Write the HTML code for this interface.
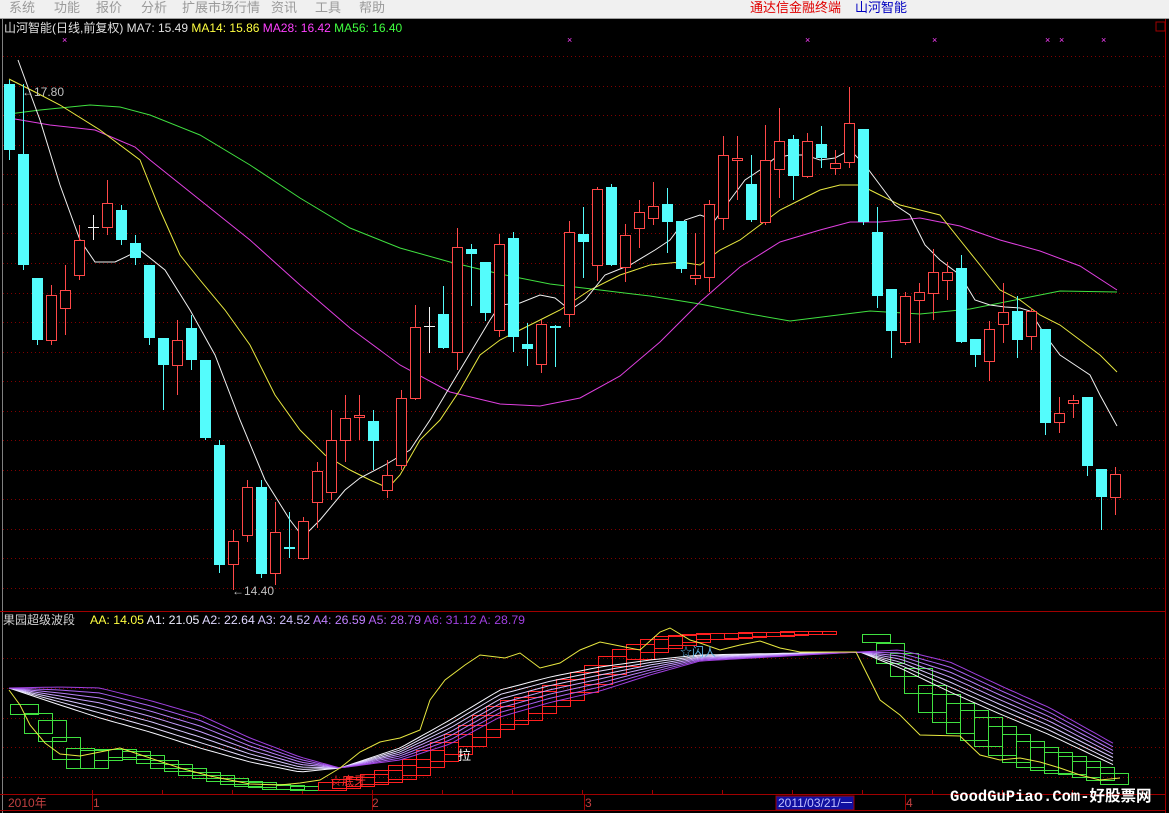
<!DOCTYPE html>
<html><head><meta charset="utf-8"><style>
body{margin:0;width:1169px;height:813px;overflow:hidden;background:#000;font-family:"Liberation Sans","Noto Sans CJK SC",sans-serif}
#menu{position:absolute;left:0;top:0;width:1169px;height:18px;background:#f0f0f0;border-bottom:1px solid #a0a0a0}
#menu span{position:absolute;top:0;font-size:13px;color:#9a9a9a;line-height:16px}
svg{position:absolute;left:0;top:0}
</style></head><body>
<div id="menu">
<span style="left:9px">系统</span><span style="left:54px">功能</span><span style="left:96px">报价</span><span style="left:141px">分析</span><span style="left:182px">扩展市场行情</span><span style="left:271px">资讯</span><span style="left:315px">工具</span><span style="left:359px">帮助</span>
<span style="left:750px;color:#e00000;font-size:13px">通达信金融终端</span><span style="left:855px;color:#0000c0;font-size:13px">山河智能</span>
</div>
<svg id="s" width="1169" height="813" xmlns="http://www.w3.org/2000/svg" font-family="Liberation Sans, Noto Sans CJK SC, sans-serif">
<rect x="0" y="19" width="1169" height="794" fill="#000"/>
<line x1="2.5" y1="19" x2="2.5" y2="813" stroke="#808080"/>
<line x1="1165.5" y1="19" x2="1165.5" y2="813" stroke="#a00000"/>
<rect x="1156" y="22" width="9" height="9" fill="none" stroke="#a00000"/>
<line x1="0" y1="611.5" x2="1166" y2="611.5" stroke="#a00000"/>
<line x1="0" y1="794.5" x2="1166" y2="794.5" stroke="#a00000"/>
<line x1="0" y1="810.5" x2="1166" y2="810.5" stroke="#a00000"/>
<g id="grid"></g>
<g id="ma" fill="none"></g>
<g id="cd"></g>
<g id="low" fill="none"></g>
<text x="4" y="32" font-size="12" fill="#e0e0e0">山河智能(日线,前复权) MA7: 15.49 <tspan fill="#ffff40">MA14: 15.86</tspan> <tspan fill="#ff40ff">MA28: 16.42</tspan> <tspan fill="#40ff40">MA56: 16.40</tspan></text>
<g fill="#ff40ff" font-size="9"><text x="62" y="43">×</text><text x="567" y="43">×</text><text x="805" y="43">×</text><text x="932" y="43">×</text><text x="1045" y="43">×</text><text x="1059" y="43">×</text><text x="1101" y="43">×</text></g>
<text x="22" y="96" font-size="12" fill="#c0c0c0">←17.80</text>
<text x="232" y="595" font-size="12" fill="#c0c0c0">←14.40</text>
<text x="3" y="624" font-size="12" fill="#d0d0d0">果园超级波段</text>
<text x="90" y="624" font-size="12.3" fill="#ffff40">AA: 14.05 <tspan fill="#f0f0ff">A1: 21.05</tspan> <tspan fill="#e0d8ff">A2: 22.64</tspan> <tspan fill="#d0c0ff">A3: 24.52</tspan> <tspan fill="#c080ff">A4: 26.59</tspan> <tspan fill="#b060f0">A5: 28.79</tspan> <tspan fill="#a040e0">A6: 31.12</tspan> <tspan fill="#a040e0">A: 28.79</tspan></text>
<text x="458" y="760" font-size="13" fill="#fff">拉</text>
<text x="330" y="785" font-size="12" fill="#ff3030">☆底牙</text>
<text x="680" y="656" font-size="12" fill="#60b0e0">☆闪人</text>
<g font-size="12" fill="#c04040"><text x="8" y="807">2010年</text><text x="93" y="807">1</text><text x="372" y="807">2</text><text x="585" y="807">3</text><text x="906" y="807">4</text></g>
<rect x="776" y="796" width="78" height="14" fill="#1010a0" stroke="#a00000"/>
<text x="778" y="807" font-size="12" fill="#c0c0ff">2011/03/21/一</text>
<text x="950" y="801" font-size="15.5" font-weight="bold" fill="#fff" font-family="Liberation Mono, Noto Sans CJK SC, monospace">GoodGuPiao.Com-好股票网</text>
</svg>
<script>
var NS="http://www.w3.org/2000/svg";
function el(p,t,a){var e=document.createElementNS(NS,t);for(var k in a)e.setAttribute(k,a[k]);document.getElementById(p).appendChild(e);return e;}
for(var y=588;y>50;y-=29.55){el("grid","line",{x1:3,x2:1165,y1:Math.round(y)+.5,y2:Math.round(y)+.5,stroke:"#800000","stroke-dasharray":"1 3"});}
[658,688,718,747,777].forEach(function(y){el("grid","line",{x1:3,x2:1165,y1:y+.5,y2:y+.5,stroke:"#800000","stroke-dasharray":"1 3"});});
for(var x=92;x<1160;x+=70){el("grid","line",{x1:x+.5,x2:x+.5,y1:790,y2:795,stroke:"#a00000"});}
[92,372,584,905].forEach(function(x){el("grid","line",{x1:x+.5,x2:x+.5,y1:795,y2:811,stroke:"#a00000"});});
function pl(g,pts,c,w){el(g,"polyline",{points:pts,stroke:c,"stroke-width":w||1});}
pl("ma","9,114 40,110 90,105 120,107 150,115 200,135 250,165 300,198 350,228 400,248 450,262 500,274 550,284 600,290 650,296 700,304 750,314 790,321 830,316 870,311 920,314 970,309 1020,299 1060,291 1117,292","#40e040");
pl("ma","9,118 50,125 95,130 135,147 150,160 200,200 250,240 300,285 350,328 400,365 450,392 500,404 540,406 580,398 620,376 660,342 700,302 740,267 780,242 820,230 850,222 880,222 920,218 960,226 1000,240 1040,251 1080,266 1117,290","#e040e0");
pl("ma","9,79 35,92 60,105 100,130 140,160 160,210 180,255 200,280 225,310 250,345 275,395 300,430 325,455 350,470 370,480 388,488 400,475 420,440 440,420 460,390 480,355 500,340 520,330 540,320 560,310 590,290 620,275 650,265 680,262 700,265 720,250 740,240 760,225 780,210 800,200 820,190 840,185 860,185 880,195 900,205 920,210 940,215 960,240 980,265 1000,290 1020,300 1040,315 1060,325 1080,340 1100,355 1117,372","#e8e840");
pl("ma","18,60 40,120 60,185 80,240 95,262 115,262 140,250 165,270 190,310 215,355 240,420 265,480 290,520 303,537 320,520 345,490 360,478 385,465 410,450 430,420 445,395 460,370 475,345 490,320 500,305 520,303 540,295 555,298 570,310 585,300 605,275 630,265 655,250 670,240 685,220 700,215 715,220 730,200 745,180 760,170 775,158 790,155 805,155 820,160 835,158 850,150 865,165 880,185 895,205 910,215 925,245 940,260 960,275 975,300 990,305 1005,307 1020,308 1030,311 1045,335 1060,355 1075,365 1090,375 1100,395 1117,426","#f0f0f0");
var C=[["C",84,150,80,160],["C",154,265,84,270],["C",278,340,278,345],["R",295,340,285,345],["R",290,308,265,335],["R",240,275,225,280],["W",227,228,215,240],["R",203,227,180,235],["C",210,240,205,245],["C",243,258,235,265],["C",265,338,265,345],["C",338,365,338,410],["R",340,365,320,395],["C",328,360,315,370],["C",360,438,360,440],["C",445,565,440,573],["R",541,564,530,590],["R",487,535,480,542],["C",487,574,480,578],["R",532,573,502,585],["C",547,549,512,558],["R",521,558,517,560],["R",471,502,462,528],["R",440,492,410,500],["R",418,440,395,462],["R",415,417,395,440],["C",421,441,410,470],["R",475,490,460,498],["R",398,465,390,470],["R",327,398,305,400],["W",326,327,307,353],["C",314,348,286,349],["R",247,352,228,370],["C",249,254,244,306],["C",262,313,262,321],["R",244,330,234,337],["C",238,337,232,352],["C",344,349,323,366],["R",324,364,320,373],["C",326,328,325,367],["R",232,314,221,327],["C",234,242,207,278],["R",189,265,187,281],["C",187,265,184,266],["R",235,267,224,282],["R",212,228,200,248],["R",206,218,182,225],["C",204,222,188,253],["C",221,269,221,273],["R",275,278,233,285],["R",204,277,200,292],["R",155,218,136,230],["R",158,160,136,200],["C",184,220,155,222],["R",160,222,125,225],["R",141,169,108,198],["C",139,176,135,200],["R",141,176,133,178],["C",144,158,126,168],["R",163,168,150,175],["R",123,162,87,168],["C",129,222,129,225],["C",232,296,207,308],["C",289,331,289,358],["R",296,342,292,345],["R",292,300,283,343],["R",272,293,249,320],["R",272,280,262,300],["C",268,342,255,343],["C",339,355,339,367],["R",329,361,321,381],["R",312,324,283,343],["C",311,340,296,358],["R",311,336,308,350],["C",329,423,329,435],["R",413,422,397,433],["R",400,403,395,418],["C",397,466,397,476],["C",469,497,469,530],["R",474,497,467,515]];
C.forEach(function(c,k){var x=9+14*k;var col=c[0]=="C"?"#54fcfc":c[0]=="R"?"#ff4848":"#f0f0f0";
el("cd","line",{x1:x+.5,x2:x+.5,y1:c[3],y2:c[4],stroke:col});
var h=Math.max(c[2]-c[1],1);
if(c[0]=="C")el("cd","rect",{x:x-5,y:c[1],width:11,height:h,fill:col});
else if(c[0]=="W")el("cd","rect",{x:x-5,y:c[1],width:11,height:1,fill:col});
else el("cd","rect",{x:x-4.5,y:c[1]+.5,width:10,height:h,fill:"#000",stroke:col});});
function interp(P,x){for(var i=0;i<P.length-1;i++){if(x<=P[i+1][0]){var t=(x-P[i][0])/(P[i+1][0]-P[i][0]);return P[i][1]+t*(P[i+1][1]-P[i][1]);}}return P[P.length-1][1];}
var W=[[9,688],[60,705],[100,718],[150,732],[200,748],[250,762],[300,772],[340,768],[400,748],[450,720],[500,690],[550,677],[600,667],[650,660],[700,655],[800,653],[860,652],[900,668],[950,692],[1000,714],[1050,735],[1118,767]];
var D=[[9,0],[60,-3],[100,-5],[200,-5.5],[300,-2.5],[340,0],[400,2],[450,4],[500,4.5],[600,4],[700,1],[860,0],[900,-3],[950,-5],[1050,-4.5],[1118,-3.5]];
var cols=["#f8f8ff","#e8e0ff","#d8c8ff","#c8a0ff","#b880f8","#a860f0","#a040e0"];
function boxes(T,H,x0,x1,col){for(var x=x0;x<=x1;x+=14){var t=interp(T,x),h=interp(H,x);el("low","rect",{x:x+.5,y:Math.round(t)+.5,width:28,height:Math.round(h),stroke:col});}}
boxes([[10,704],[24,713],[38,720],[52,737],[66,748],[80,750],[100,748],[120,750],[150,760],[190,772],[230,780],[270,785],[290,786]],[[10,10],[24,20],[52,22],[80,18],[100,8],[150,8],[200,6],[290,4]],10,290,"#40e040");
boxes([[318,782],[340,778],[370,772],[400,760],[430,742],[458,725],[490,703],[520,695],[575,670],[605,652],[645,637],[700,633],[800,631],[830,632]],[[318,8],[360,10],[420,18],[500,24],[600,18],[650,12],[700,6],[830,2]],318,810,"#ff2020");
boxes([[862,634],[876,643],[890,653],[904,668],[918,685],[946,703],[975,718],[1004,735],[1032,748],[1060,757],[1090,768],[1104,775],[1118,779]],[[862,8],[876,20],[904,25],[946,30],[1004,28],[1060,18],[1104,10],[1118,8]],862,1104,"#40e040");
for(var i=0;i<7;i++){var p=[];for(var x=9;x<=1118;x+=6){p.push(x+","+(interp(W,x)+interp(D,x)*i).toFixed(1));}pl("low",p.join(" "),cols[i]);}
pl("low","9,690 20,705 30,725 45,743 60,754 80,756 100,752 120,748 150,758 180,768 210,776 250,784 280,785 300,783 320,780 340,768 360,752 380,742 400,738 420,730 430,700 445,680 465,665 480,655 505,658 520,653 540,668 560,663 580,650 600,642 620,646 640,650 660,632 670,628 690,640 700,643 720,650 740,645 760,641 780,648 800,652 830,652 856,652 870,680 880,700 900,715 920,735 960,736 980,755 1000,760 1020,758 1040,762 1060,768 1080,775 1100,780 1120,778","#e8e840");
</script>
</body></html>
